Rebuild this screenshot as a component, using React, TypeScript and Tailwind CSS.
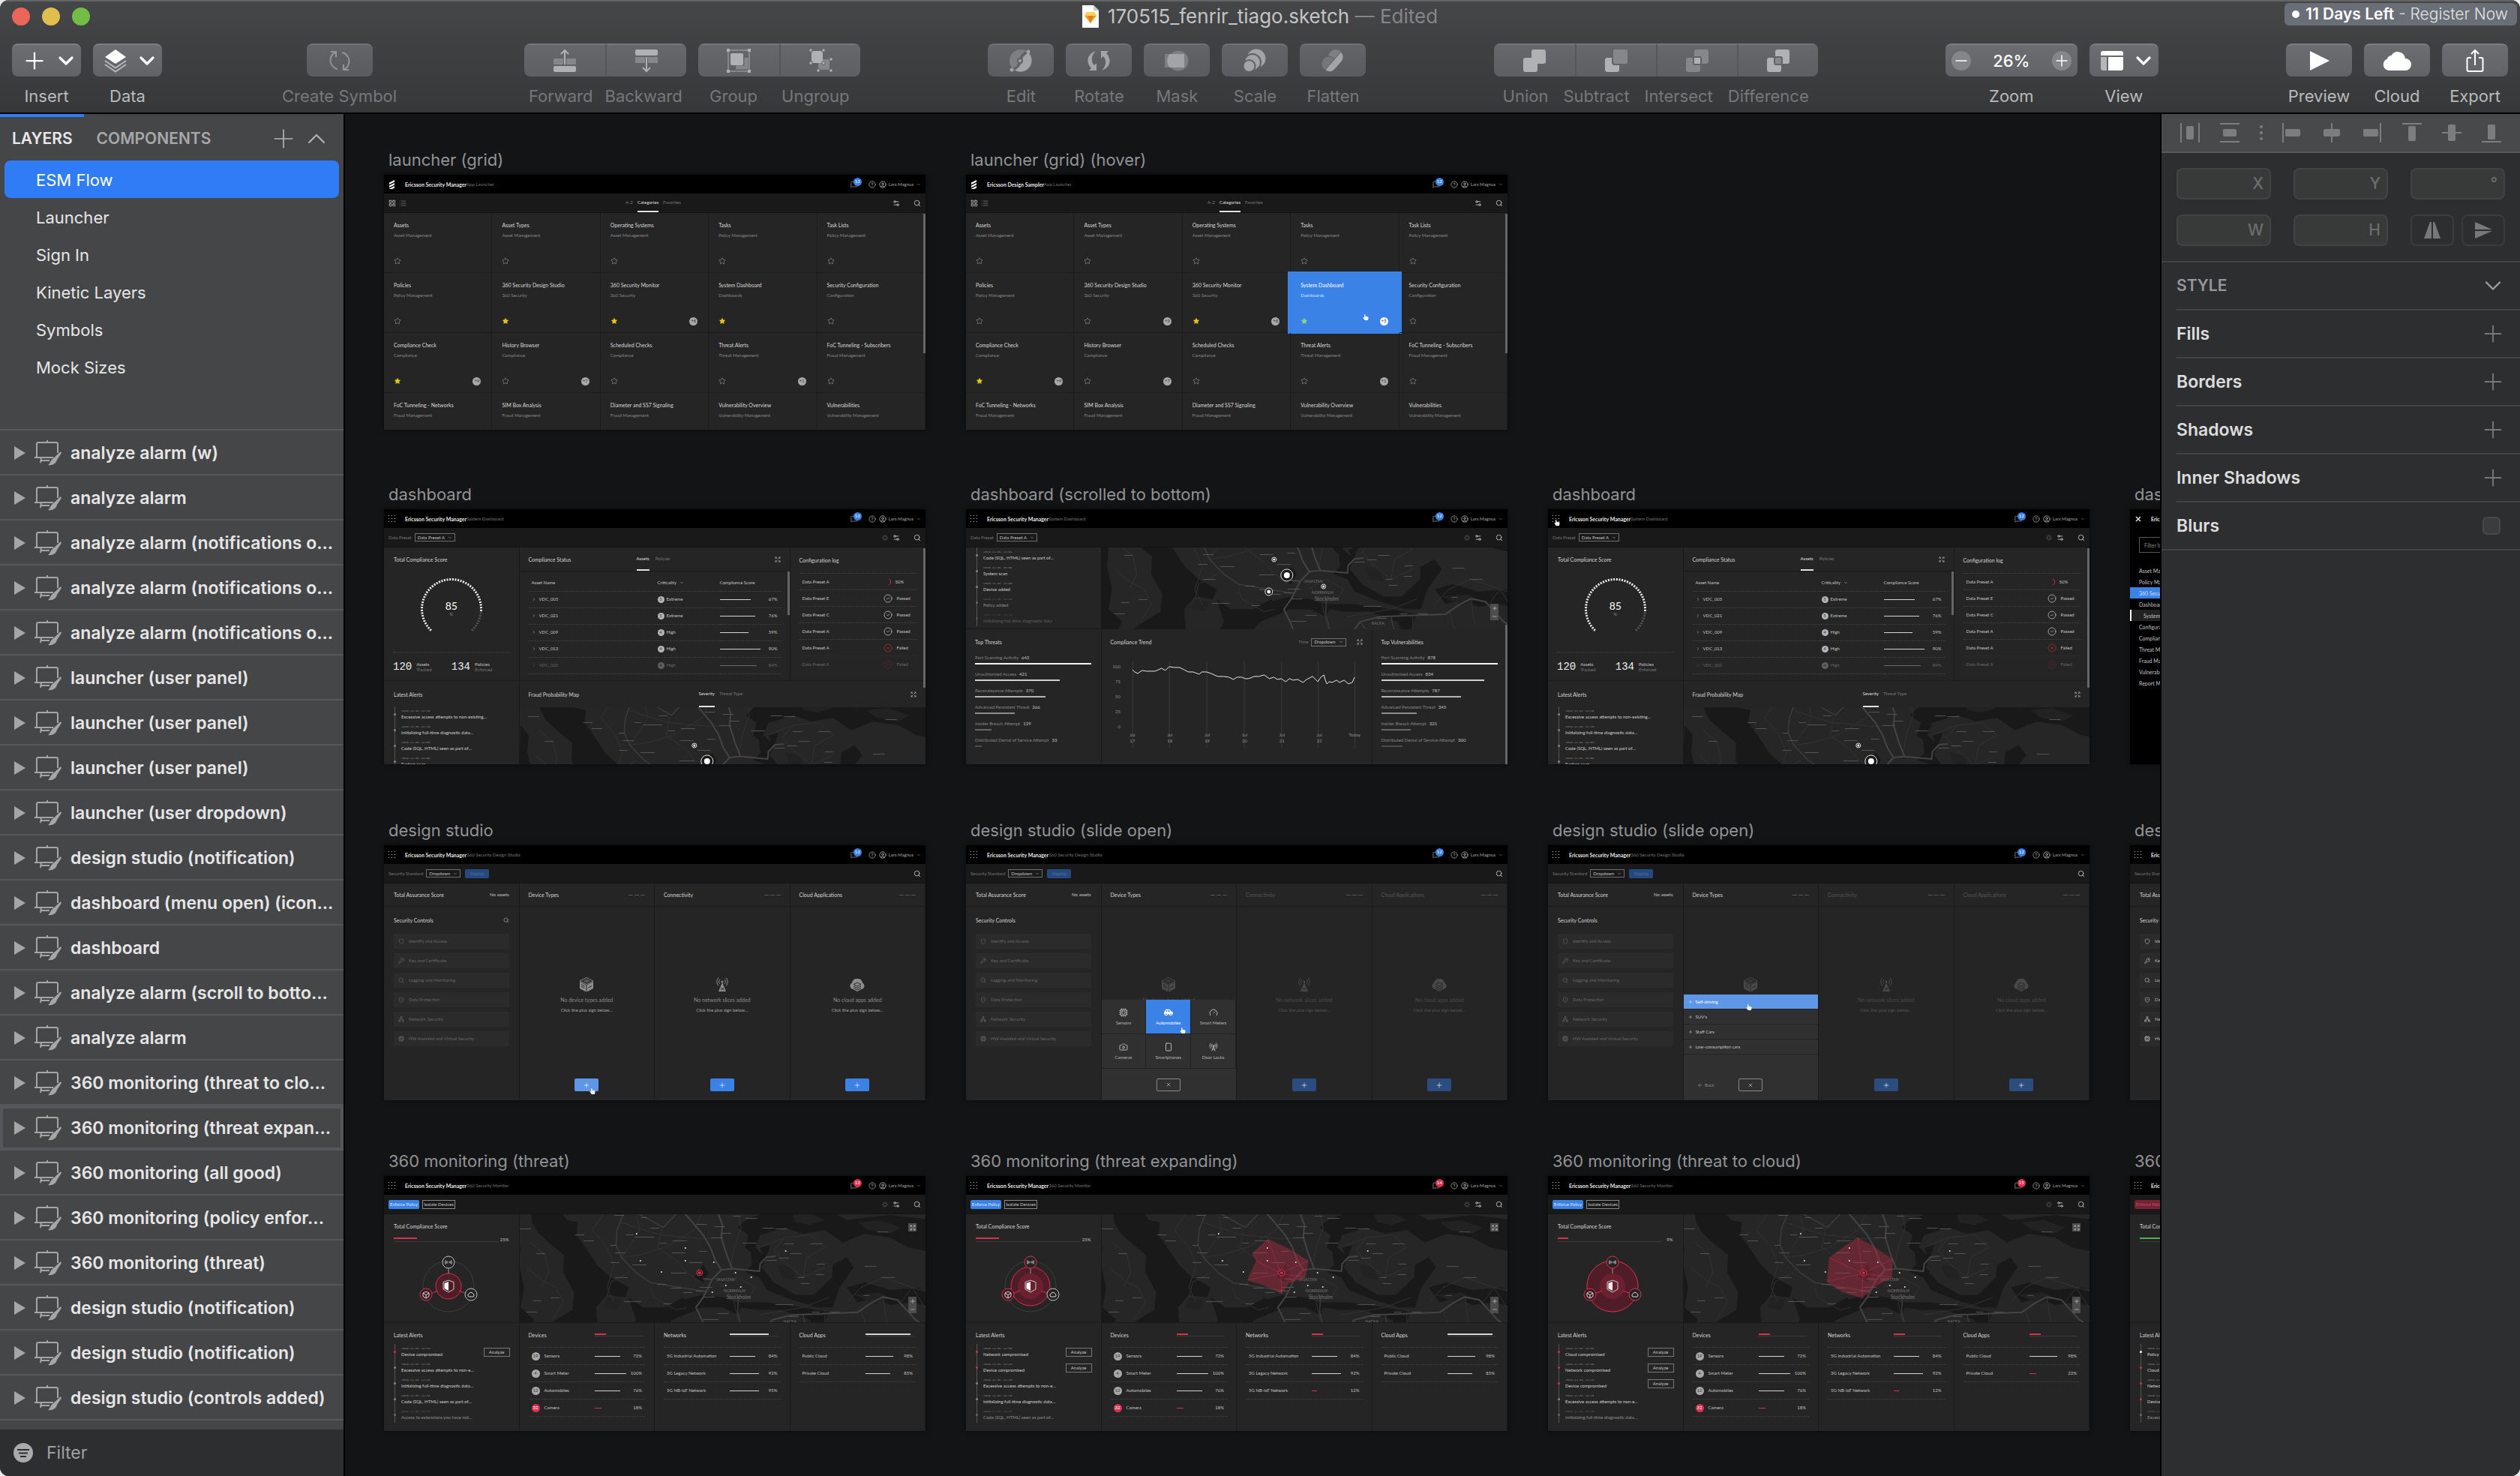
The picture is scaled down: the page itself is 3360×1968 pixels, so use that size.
import React from "react";
import type { ReactNode } from "react";
import { FaHandPointer, FaCarSide } from "react-icons/fa";
import {
  Camera,
  ChevronDown,
  ChevronRight,
  ChevronUp,
  CircleCheck,
  CircleHelp,
  CircleUser,
  CircleX,
  Cpu,
  Expand,
  Gauge as GaugeIcon,
  KeyRound,
  LayoutGrid,
  List,
  Loader,
  MessageSquare,
  Minus,
  Network,
  Plus,
  RadioTower,
  Search,
  Shield,
  Smartphone,
  Settings2,
  ShieldCheck,
  Star,
  X,
  ArrowLeft,
} from "lucide-react";

/* ------------------------------------------------------------------ */
/* Toolbar                                                             */
/* ------------------------------------------------------------------ */

const BRIGHT = "#bdbec0";
const DIM = "#8e8f92";

function Glyph({ children }: { children: ReactNode }) {
  return (
    <svg viewBox="0 0 32 32" className="size-8" fill="none" aria-hidden="true">
      {children}
    </svg>
  );
}

const glyphs: Record<string, ReactNode> = {
  symbol: (
    <Glyph>
      <g stroke="#a9aaac" strokeWidth="2" strokeLinecap="round">
        <path d="M12 27C5 24 2.500 18 4 12C5 8.500 7 6 10.500 4.500" />
        <path d="M4.500 4H11V10.500" />
        <path d="M20 5C27 8 29.500 14 28 20C27 23.500 25 26 21.500 27.500" />
        <path d="M27.500 28H21V21.500" />
      </g>
    </Glyph>
  ),
  forward: (
    <Glyph>
      <rect x="1" y="13" width="13" height="8" rx="1" fill={DIM} />
      <rect x="18" y="13" width="13" height="8" rx="1" fill={DIM} />
      <rect x="1" y="23" width="30" height="8" rx="2" fill={BRIGHT} />
      <path d="M16 21V2M11 7L16 2L21 7" stroke={BRIGHT} strokeWidth="2" />
    </Glyph>
  ),
  backward: (
    <Glyph>
      <rect x="1" y="1" width="30" height="8" rx="2" fill={BRIGHT} />
      <rect x="1" y="11" width="13" height="8" rx="1" fill={DIM} />
      <rect x="18" y="11" width="13" height="8" rx="1" fill={DIM} />
      <path d="M16 11V30M11 25L16 30L21 25" stroke={BRIGHT} strokeWidth="2" />
    </Glyph>
  ),
  group: (
    <Glyph>
      <rect x="2" y="2" width="28" height="28" stroke={DIM} strokeWidth="2" />
      <path d="M12 25H26V12" stroke={DIM} strokeWidth="5" />
      <rect x="5" y="6" width="17" height="16" rx="2" fill={BRIGHT} />
      <path d="M0 0h4v4H0zM28 0h4v4h-4zM0 28h4v4H0zM28 28h4v4h-4z" fill={BRIGHT} />
    </Glyph>
  ),
  ungroup: (
    <Glyph>
      <rect x="13" y="14" width="15" height="14" rx="2" fill={DIM} />
      <rect x="4" y="3" width="15" height="16" rx="2" fill={BRIGHT} />
      <path
        d="M1 0h4v4H1zM18 0h4v4h-4zM1 17h4v4H1zM18 17h4v4h-4zM11 27h4v4h-4zM28 27h4v4h-4zM28 12h4v4h-4z"
        fill={BRIGHT}
        stroke="#68696c"
        strokeWidth="1"
      />
    </Glyph>
  ),
  edit: (
    <Glyph>
      <circle cx="16" cy="16" r="15" fill={DIM} />
      <path d="M26 5A15 15 0 0 1 7 28C14 26 17 21 18 16C19 11 22 8 26 5Z" fill={BRIGHT} />
      <path d="M4 28C11 27 14 22 15 16C16 10 20 6 26 4" stroke="#68696c" strokeWidth="3" />
      <circle cx="15" cy="16" r="3" fill={BRIGHT} stroke="#68696c" strokeWidth="2" />
      <circle cx="26" cy="4" r="2.500" fill={BRIGHT} />
      <circle cx="4" cy="28" r="2.500" fill={BRIGHT} />
    </Glyph>
  ),
  rotate: (
    <Glyph>
      <path d="M12 3C4 6 1 11 1.500 17C2 21 4 24 6 26L3 29H13V19L10 22C5 17 6 9 12 3Z" fill={BRIGHT} />
      <path d="M20 29C28 26 31 21 30.500 15C30 11 28 8 26 6L29 3H19V13L22 10C27 15 26 23 20 29Z" fill={BRIGHT} />
    </Glyph>
  ),
  mask: (
    <Glyph>
      <rect x="0" y="7" width="20" height="18" rx="1" fill={DIM} />
      <circle cx="18" cy="16" r="14" fill={DIM} stroke="#68696c" strokeWidth="1" />
      <path d="M6.500 7H26V25H6.500A14 14 0 0 1 6.500 7Z" fill={BRIGHT} />
    </Glyph>
  ),
  scale: (
    <Glyph>
      <circle cx="18" cy="13" r="12.500" fill={BRIGHT} />
      <circle cx="13" cy="18" r="11" fill={BRIGHT} stroke="#68696c" strokeWidth="2" />
      <circle cx="8.500" cy="23" r="8" fill={BRIGHT} stroke="#68696c" strokeWidth="2" />
    </Glyph>
  ),
  flatten: (
    <Glyph>
      <circle cx="20" cy="11" r="10" fill={DIM} />
      <circle cx="11" cy="20" r="10" fill="#848588" stroke="#68696c" strokeWidth="1" />
      <path d="M27 4C31 8 31 14 27 18L18 28C14 32 9 31 6 28Z" fill={BRIGHT} stroke="#68696c" strokeWidth="1" />
    </Glyph>
  ),
  union: (
    <Glyph>
      <rect x="12" y="1" width="19" height="19" rx="3" fill={BRIGHT} />
      <rect x="1" y="12" width="19" height="19" rx="3" fill={BRIGHT} />
    </Glyph>
  ),
  subtract: (
    <Glyph>
      <rect x="1" y="12" width="19" height="19" rx="3" fill={BRIGHT} />
      <rect x="11" y="0" width="21" height="21" rx="3" fill={DIM} stroke="#68696c" strokeWidth="2" />
    </Glyph>
  ),
  intersect: (
    <Glyph>
      <rect x="12" y="1" width="19" height="19" rx="3" fill={DIM} />
      <rect x="1" y="12" width="19" height="19" rx="3" fill={DIM} />
      <rect x="11" y="11" width="10" height="10" rx="2" fill={BRIGHT} stroke="#68696c" strokeWidth="2" />
    </Glyph>
  ),
  difference: (
    <Glyph>
      <rect x="12" y="1" width="19" height="19" rx="3" fill={BRIGHT} />
      <rect x="1" y="12" width="19" height="19" rx="3" fill={BRIGHT} />
      <rect x="11" y="11" width="10" height="10" rx="2" fill={DIM} stroke="#68696c" strokeWidth="2" />
    </Glyph>
  ),
  stack: (
    <Glyph>
      <path d="M16 1L30 11L16 20L2 11Z" fill="#fff" />
      <path d="M2 16L16 25.500L30 16M2 21L16 30.500L30 21" stroke="#b5b6b8" strokeWidth="2" />
    </Glyph>
  ),
  view: (
    <Glyph>
      <path d="M1 7V6a3 3 0 0 1 3-3H28a3 3 0 0 1 3 3V9H1Z" fill="#fff" />
      <path d="M1 11H9V29H4a3 3 0 0 1-3-3Z" fill="#b5b6b8" />
      <path d="M11 11H31V26a3 3 0 0 1-3 3H11Z" fill="#fff" />
    </Glyph>
  ),
  play: (
    <Glyph>
      <path d="M4 3L30 16L4 29Z" fill="#fff" />
    </Glyph>
  ),
  cloud: (
    <svg viewBox="0 0 40 28" className="h-7 w-10" aria-hidden="true">
      <path d="M9 27a8 8 0 0 1-2-15.500C8 8 10 7 12.500 7A10 10 0 0 1 31 11a8 8 0 0 1 0 16Z" fill="#fff" />
    </svg>
  ),
  export: (
    <Glyph>
      <path
        d="M11 12H7.500a2 2 0 0 0-2 2V28a2 2 0 0 0 2 2H24.500a2 2 0 0 0 2-2V14a2 2 0 0 0-2-2H21M16 22V2M11 7L16 2L21 7"
        stroke="#fff"
        strokeWidth="2"
      />
    </Glyph>
  ),
};

const buttonFace = "flex h-11 items-center border-t-2 border-[#7d7e81] bg-linear-to-b from-[#6c6d70] to-[#626366]";

function ToolButton({ label, icon, live = false }: { label: string; icon: string; live?: boolean }) {
  return (
    <div className="flex flex-col items-center gap-2">
      <button aria-label={label} className={`${buttonFace} w-22 justify-center rounded-lg ${live ? "" : "opacity-80"}`}>
        {glyphs[icon]}
      </button>
      <span className={`text-[22px] leading-9 ${live ? "text-[#b9babb]" : "text-[#77787a]"}`}>{label}</span>
    </div>
  );
}

function MenuButton({ label, children }: { label: string; children: ReactNode }) {
  return (
    <div className="flex flex-col items-center gap-2">
      <button aria-label={label} className={`${buttonFace} w-[92px] gap-2 rounded-lg pl-3 text-white`}>
        <span className="flex w-9 justify-center">{children}</span>
        <ChevronDown className="size-8" strokeWidth={2.5} />
      </button>
      <span className="text-[22px] leading-9 text-[#b9babb]">{label}</span>
    </div>
  );
}

function Segments({ items, gap }: { items: [string, string][]; gap: string }) {
  return (
    <div className="flex flex-col items-center gap-2">
      <div className="flex overflow-hidden rounded-lg opacity-90">
        {items.map(([label, icon], i) => (
          <button
            key={label}
            aria-label={label}
            className={`${buttonFace} w-27 justify-center ${i > 0 ? "border-l-2 border-l-[#58595c]" : ""}`}
          >
            {glyphs[icon]}
          </button>
        ))}
      </div>
      <div className={`flex ${gap}`}>
        {items.map(([label]) => (
          <span key={label} className="text-[22px] leading-9 text-[#77787a]">
            {label}
          </span>
        ))}
      </div>
    </div>
  );
}

function TitleBar() {
  return (
    <header className="flex flex-col border-b-2 border-black bg-linear-to-b from-[#454648] to-[#37383a]">
      <div className="grid h-14 grid-cols-3 items-start border-t-2 border-[#636466]">
        <div className="flex gap-4 px-4 pt-2">
          <button aria-label="Close" className="size-6 rounded-full bg-[#ec6559]" />
          <button aria-label="Minimize" className="size-6 rounded-full bg-[#e0bd4d]" />
          <button aria-label="Full screen" className="size-6 rounded-full bg-[#71bd46]" />
        </div>
        <h1 className="flex items-center justify-center gap-3 pt-1 text-[26px] leading-8 whitespace-nowrap text-[#c3c4c5]">
          <svg viewBox="0 0 22 30" className="h-[30px] w-[22px]" aria-hidden="true">
            <path d="M0 0H15L22 7V30H0Z" fill="#fff" />
            <path d="M15 0V7H22Z" fill="#c9c9c9" />
            <path d="M6 9H16L19 14L11 24L3 14Z" fill="#f0a429" />
            <path d="M6 9H16L19 14H3Z" fill="#fbd058" />
            <path d="M7 14H15L11 24Z" fill="#ea7b1d" />
          </svg>
          <span>
            170515_fenrir_tiago.sketch <span className="text-[#85868a]">— Edited</span>
          </span>
        </h1>
        <div className="flex justify-end pt-0.5 pr-1">
          <a
            href="#register"
            className="flex h-[30px] items-center gap-2 rounded-md bg-[#6a6e76] pr-3 pl-2.5 text-[21px] font-light whitespace-nowrap text-[#e4e5e7]"
          >
            <span className="size-2.5 rounded-full bg-white" />
            <span>
              <b className="font-semibold text-white">11 Days Left</b> - Register Now
            </span>
          </a>
        </div>
      </div>
      <div className="flex h-[94px] items-start justify-between px-4 pt-0.5">
        <div className="flex gap-40">
          <div className="flex gap-4">
            <MenuButton label="Insert">
              <Plus className="size-9" strokeWidth={1.5} />
            </MenuButton>
            <MenuButton label="Data">{glyphs.stack}</MenuButton>
          </div>
          <ToolButton label="Create Symbol" icon="symbol" />
        </div>
        <div className="flex gap-4">
          <Segments gap="gap-4" items={[["Forward", "forward"], ["Backward", "backward"]]} />
          <Segments gap="gap-8" items={[["Group", "group"], ["Ungroup", "ungroup"]]} />
        </div>
        <div className="flex gap-4">
          <ToolButton label="Edit" icon="edit" />
          <ToolButton label="Rotate" icon="rotate" />
          <ToolButton label="Mask" icon="mask" />
          <ToolButton label="Scale" icon="scale" />
          <ToolButton label="Flatten" icon="flatten" />
        </div>
        <Segments
          gap="gap-5"
          items={[
            ["Union", "union"],
            ["Subtract", "subtract"],
            ["Intersect", "intersect"],
            ["Difference", "difference"],
          ]}
        />
        <div className="flex gap-4">
          <div className="flex flex-col items-center gap-2">
            <div className={`${buttonFace} w-44 justify-between rounded-lg px-2 text-white`}>
              <button aria-label="Zoom out" className="flex size-6.5 items-center justify-center rounded-full bg-[#85868a]">
                <Minus className="size-6" strokeWidth={1.5} />
              </button>
              <span className="text-[22px] font-medium">26%</span>
              <button aria-label="Zoom in" className="flex size-6.5 items-center justify-center rounded-full bg-[#85868a]">
                <Plus className="size-6" strokeWidth={1.5} />
              </button>
            </div>
            <span className="text-[22px] leading-9 text-[#b9babb]">Zoom</span>
          </div>
          <MenuButton label="View">{glyphs.view}</MenuButton>
        </div>
        <div className="flex gap-4">
          <ToolButton label="Preview" icon="play" live />
          <ToolButton label="Cloud" icon="cloud" live />
          <ToolButton label="Export" icon="export" live />
        </div>
      </div>
    </header>
  );
}

/* ------------------------------------------------------------------ */
/* Layer list                                                          */
/* ------------------------------------------------------------------ */

const pages = ["ESM Flow", "Launcher", "Sign In", "Kinetic Layers", "Symbols", "Mock Sizes"];

const layers = [
  "analyze alarm (w)",
  "analyze alarm",
  "analyze alarm (notifications o...",
  "analyze alarm (notifications o...",
  "analyze alarm (notifications o...",
  "launcher (user panel)",
  "launcher (user panel)",
  "launcher (user panel)",
  "launcher (user dropdown)",
  "design studio (notification)",
  "dashboard (menu open) (icon...",
  "dashboard",
  "analyze alarm (scroll to botto...",
  "analyze alarm",
  "360 monitoring (threat to clo...",
  "360 monitoring (threat expan...",
  "360 monitoring (all good)",
  "360 monitoring (policy enfor...",
  "360 monitoring (threat)",
  "design studio (notification)",
  "design studio (notification)",
  "design studio (controls added)",
];

function ArtboardIcon() {
  return (
    <svg viewBox="0 0 36 34" className="h-[34px] w-9 shrink-0" fill="none" aria-hidden="true">
      <g stroke="#a5a6a8" strokeWidth="2">
        <path d="M3 23V5a2 2 0 0 1 2-2H29a2 2 0 0 1 2 2V17M17 3V0M0 23H25M9 23L8 30M8 27H20" />
      </g>
      <path d="M35 15L24 25C21 27 21 31 18 33C24 34 29 31 30 26L36 17Z" fill="#a5a6a8" />
    </svg>
  );
}

function Sidebar() {
  return (
    <aside className="flex w-[460px] shrink-0 flex-col border-r-2 border-black bg-[#454648]">
      <div className="h-1 w-28 bg-[#2f7cf6]" />
      <div className="flex h-[58px] items-center pr-4 pl-4">
        <button className="text-[21px] font-semibold text-[#e8e8e9]">LAYERS</button>
        <button className="ml-8 text-[21px] font-semibold text-[#a7a8aa]">COMPONENTS</button>
        <button aria-label="Add page" className="ml-auto text-[#b4b5b7]">
          <Plus className="size-10" strokeWidth={1} />
        </button>
        <button aria-label="Collapse pages" className="ml-1 text-[#b4b5b7]">
          <ChevronUp className="size-10" strokeWidth={1.25} />
        </button>
      </div>
      <nav className="flex h-[358px] flex-col px-1.5">
        {pages.map((page, i) => (
          <button
            key={page}
            className={`h-[50px] rounded-lg pt-0.5 pl-[42px] text-left text-[22px] text-[#e6e6e7] ${
              i === 0 ? "bg-[#2f7cf6] text-white" : ""
            }`}
          >
            {page}
          </button>
        ))}
      </nav>
      <ul className="min-h-0 flex-1 overflow-hidden border-t-2 border-[#595a5c]">
        {layers.map((layer, i) => (
          <li
            key={i}
            className={`flex h-15 items-center border-b-2 border-[#56575a] pt-0.5 pl-[18px] ${
              i === 15 ? "outline-4 -outline-offset-4 outline-[#56575a]" : ""
            }`}
          >
            <button aria-label={`Expand ${layer}`} className="shrink-0">
              <svg viewBox="0 0 16 18" className="h-[18px] w-4" aria-hidden="true">
                <path d="M1 0L16 9L1 18Z" fill="#a5a6a8" />
              </svg>
            </button>
            <span className="ml-3 flex">
              <ArtboardIcon />
            </span>
            <span className="ml-3 text-[23px] font-semibold whitespace-nowrap text-[#e6e6e7]">{layer}</span>
          </li>
        ))}
      </ul>
      <label className="flex h-[62px] shrink-0 items-center gap-[18px] bg-[#2d2e30] pl-[18px]">
        <svg viewBox="0 0 26 26" className="size-[26px]" aria-hidden="true">
          <circle cx="13" cy="13" r="13" fill="#a9aaab" />
          <path d="M5 9H21M7 13.500H19M9 18H17" stroke="#2d2e30" strokeWidth="2" />
        </svg>
        <input
          aria-label="Filter layers"
          placeholder="Filter"
          className="w-80 bg-transparent text-[23px] text-white outline-none placeholder:text-[#a0a1a3]"
        />
      </label>
    </aside>
  );
}

/* ------------------------------------------------------------------ */
/* Inspector                                                           */
/* ------------------------------------------------------------------ */

function AlignGlyph({ d, bar }: { d: string; bar: [number, number, number, number] }) {
  return (
    <svg viewBox="0 0 28 28" className="size-7" aria-hidden="true">
      <path d={d} stroke="#7c7d7f" strokeWidth="2" />
      <rect x={bar[0]} y={bar[1]} width={bar[2]} height={bar[3]} rx="2" fill="#7c7d7f" />
    </svg>
  );
}

const aligners: { label: string; d: string; bar: [number, number, number, number] }[] = [
  { label: "Distribute horizontally", d: "M2 1V27M26 1V27", bar: [9, 5, 10, 18] },
  { label: "Distribute vertically", d: "M1 2H27M1 26H27", bar: [5, 9, 18, 10] },
  { label: "Align left", d: "M2 1V27", bar: [5, 9, 20, 10] },
  { label: "Align center", d: "M14 1V27", bar: [3, 9, 22, 10] },
  { label: "Align right", d: "M26 1V27", bar: [3, 9, 20, 10] },
  { label: "Align top", d: "M1 2H27", bar: [9, 5, 10, 20] },
  { label: "Align middle", d: "M1 14H27", bar: [9, 3, 10, 22] },
  { label: "Align bottom", d: "M1 26H27", bar: [9, 3, 10, 20] },
];

function Field({ label }: { label: string }) {
  return (
    <label className="flex h-[42px] items-center rounded-lg border-2 border-[#424345] bg-[#383939] px-2">
      <input aria-label={label} className="min-w-0 flex-1 bg-transparent text-[21px] text-white outline-none" />
      <span className="text-[21px] font-medium text-[#6c6d6f]">{label}</span>
    </label>
  );
}

function Inspector() {
  return (
    <aside className="flex w-[480px] shrink-0 flex-col border-l-2 border-black bg-[#2d2e30]">
      <div className="flex h-[52px] items-center justify-between border-b-2 border-[#58595b] bg-[#48494b] px-6">
        {aligners.map((a, i) => (
          <React.Fragment key={a.label}>
            {i === 2 && (
              <svg viewBox="0 0 4 24" className="h-6 w-1" fill="#7c7d7f" aria-hidden="true">
                <circle cx="2" cy="4" r="2" />
                <circle cx="2" cy="12" r="2" />
                <circle cx="2" cy="20" r="2" />
              </svg>
            )}
            <button aria-label={a.label}>
              <AlignGlyph d={a.d} bar={a.bar} />
            </button>
          </React.Fragment>
        ))}
      </div>
      <div className="grid h-[146px] grid-cols-3 content-center gap-x-[30px] gap-y-5 border-b-2 border-[#424345] px-5">
        <Field label="X" />
        <Field label="Y" />
        <Field label="°" />
        <Field label="W" />
        <Field label="H" />
        <div className="grid grid-cols-2 gap-2.5">
          <button aria-label="Flip horizontally" className="flex items-center justify-center rounded-lg border-2 border-[#3a3b3d]">
            <svg viewBox="0 0 24 24" className="size-6" fill="#77787a" aria-hidden="true">
              <path d="M11 1V23H1L9 1ZM13 1V23H23L15 1Z" />
            </svg>
          </button>
          <button aria-label="Flip vertically" className="flex items-center justify-center rounded-lg border-2 border-[#3a3b3d]">
            <svg viewBox="0 0 24 24" className="size-6" fill="#77787a" aria-hidden="true">
              <path d="M1 11H24L1 1ZM1 13H24L1 23Z" />
            </svg>
          </button>
        </div>
      </div>
      <div className="flex flex-col border-b-2 border-[#424345] pl-5">
        <div className="flex h-[62px] items-center justify-between pr-[18px]">
          <h2 className="text-[21px] font-semibold text-[#96979a]">STYLE</h2>
          <button aria-label="Collapse style" className="text-[#a0a1a3]">
            <ChevronDown className="size-9" strokeWidth={1.5} />
          </button>
        </div>
        {["Fills", "Borders", "Shadows", "Inner Shadows", "Blurs"].map((name) => (
          <div key={name} className="flex h-16 items-center justify-between border-t-2 border-[#424345] pr-[18px]">
            <h3 className="text-[23px] font-semibold text-[#dcdddd]">{name}</h3>
            {name === "Blurs" ? (
              <input
                type="checkbox"
                aria-label="Enable blurs"
                className="mr-2 size-6 appearance-none rounded-md border-2 border-[#48494b] bg-[#3b3c3d]"
              />
            ) : (
              <button aria-label={`Add ${name}`} className="text-[#77787a]">
                <Plus className="size-9" strokeWidth={1.25} />
              </button>
            )}
          </div>
        ))}
      </div>
    </aside>
  );
}

/* ------------------------------------------------------------------ */
/* Artboards: shared parts                                             */
/* ------------------------------------------------------------------ */

function Artboard({ name, children }: { name: string; children: ReactNode }) {
  return (
    <section className="flex w-[722px] shrink-0 flex-col">
      <h2 className="h-[33px] pl-1.5 text-[22px] leading-[26px] whitespace-nowrap text-[#929395]">{name}</h2>
      <div className="relative flex h-[340px] flex-col overflow-hidden bg-[#252525] font-[Lato,sans-serif] text-[7px] leading-2 whitespace-nowrap text-[#c4c4c4] shadow-[0_0_6px_rgba(0,0,0,0.6)]">
        {children}
      </div>
    </section>
  );
}

function AppHeader({
  title = "Ericsson Security Manager",
  sub,
  lead = "dots",
  count = 12,
  alarm = false,
}: {
  title?: string;
  sub: string;
  lead?: "dots" | "logo" | "close";
  count?: number;
  alarm?: boolean;
}) {
  return (
    <div className="flex h-[25px] shrink-0 items-center bg-black pr-1.5 pl-1.5">
      <svg viewBox="0 0 10 12" className="h-3 w-2.5" aria-hidden="true">
        {lead === "dots" &&
          [0, 1, 2].map((r) =>
            [0, 1, 2].map((c) => <rect key={`${r}${c}`} x={c * 4} y={1 + r * 4} width="1" height="1" fill="#ccc" />),
          )}
        {lead === "logo" && (
          <path d="M1 3.500L8 0V2.500L1 6ZM1 7.500L8 4V6.500L1 10ZM1 11.500L8 8V10.500L1 14Z" fill="#fff" />
        )}
        {lead === "close" && <path d="M2 3L8 9M8 3L2 9" stroke="#ddd" strokeWidth="1.500" />}
      </svg>
      <span className="ml-3 font-bold text-[#e8e8e8]">{title}</span>
      <span className="text-[6px] text-[#777]">{sub}</span>
      <span className="relative ml-auto flex text-[#8a8a8a]">
        <MessageSquare className="size-2.5" />
        <span
          className={`absolute -top-1 left-1 flex size-[11px] items-center justify-center rounded-full text-[6px] text-white ${
            alarm ? "bg-[#d9304f]" : "bg-[#3b82e6]"
          }`}
        >
          {count}
        </span>
      </span>
      <CircleHelp className="ml-3.5 size-2.5 text-[#9a9a9a]" />
      <CircleUser className="ml-1 size-2.5 text-[#b5b5b5]" />
      <span className="ml-[3px] text-[6px] text-[#a5a5a5]">Lars Magnus</span>
      <ChevronDown className="ml-1 size-1.5 text-[#9f9f9f]" />
    </div>
  );
}

function SubBar({ children, tools = "full" }: { children: ReactNode; tools?: "full" | "search" | "toggle" }) {
  return (
    <div className="flex h-[26px] shrink-0 items-center border-b border-[#131313] bg-[#191919] pr-1.5 pl-1.5">
      {children}
      <span className="ml-auto flex items-center text-[#c9c9c9]">
        {tools === "full" && <Loader className="mr-1.5 size-2 text-[#888]" />}
        {tools !== "search" && <Settings2 className="mr-4.5 size-2.5" />}
        <Search className="size-2.5" />
      </span>
    </div>
  );
}

function Picker({ label, value }: { label: string; value: string }) {
  return (
    <span className="flex items-center gap-1 text-[6px] text-[#757575]">
      {label}
      <span className="flex h-[11px] items-center gap-1 border border-[#6f6f6f] px-[3px] text-[#c4c4c4]">
        {value}
        <ChevronDown className="size-1.5" />
      </span>
    </span>
  );
}

function Tab({ children, on = false }: { children: ReactNode; on?: boolean }) {
  return (
    <span className={`flex h-full items-center border-b-2 ${on ? "border-[#e4e4e4] text-[#dedede]" : "border-transparent text-[#777]"}`}>
      {children}
    </span>
  );
}

function Pointer({ className }: { className: string }) {
  return <FaHandPointer className={`absolute size-2 text-white ${className}`} />;
}

function ScrollBar({ className }: { className: string }) {
  return <span className={`absolute right-0 w-[3px] bg-[#666] ${className}`} />;
}

/* ------------------------------------------------------------------ */
/* City map                                                            */
/* ------------------------------------------------------------------ */

const mapLabels: [number, number, number][] = [
  [400, 324, 30], [446, 424, 24], [553, 349, 24], [576, 373, 28], [660, 269, 26], [734, 280, 16], [761, 321, 22],
  [693, 347, 20], [718, 357, 50], [786, 380, 18], [820, 371, 38], [650, 390, 16], [662, 421, 28], [818, 421, 36],
  [893, 413, 22], [866, 458, 36], [886, 306, 28], [936, 315, 28], [956, 343, 26], [926, 360, 32], [985, 274, 22],
  [1022, 282, 32], [1015, 382, 36], [1068, 320, 30], [1104, 323, 32], [1128, 385, 26], [1200, 385, 32],
  [1144, 424, 30], [1114, 441, 26], [1078, 450, 28], [1218, 465, 22], [1215, 508, 22], [1166, 520, 18],
  [1174, 544, 24], [1384, 336, 30], [1350, 475, 32], [1396, 520, 34], [710, 467, 38], [650, 458, 24], [816, 501, 40],
  [662, 520, 34], [780, 547, 24], [816, 562, 28], [850, 580, 26], [438, 611, 22], [484, 600, 24], [686, 614, 46],
  [796, 625, 22], [944, 662, 30], [906, 687, 40], [418, 656, 28], [1104, 628, 48], [1204, 656, 20], [1254, 657, 26],
  [1140, 676, 26], [1346, 590, 16], [906, 598, 30], [896, 557, 34], [884, 573, 26],
];

const px = (x: number) => Math.round((x - 400) * 0.4847);
const py = (y: number) => Math.round((y - 267) / 3);

const devicePins: [number, number][] = [
  [722, 346], [855, 401], [733, 452], [855, 452], [789, 498], [935, 458],
  [1133, 414], [994, 501], [1038, 518], [968, 551], [1009, 557], [930, 580],
];

function CityMap({
  x = 0,
  y = 0,
  height,
  pins,
}: {
  x?: number;
  y?: number;
  height: number;
  pins: "fraud" | "device" | "spread" | "cloud";
}) {
  return (
    <svg
      viewBox={`${x} ${y} 542 ${height}`}
      preserveAspectRatio="xMinYMin slice"
      className="block w-full"
      fill="none"
      aria-label="Map of Stockholm"
    >
      <rect x="-20" y="-10" width="600" height="200" fill="#262626" />
      <g transform="scale(0.4847 0.3333) translate(-400 -267)">
        <g fill="#191919">
          <path d="M430 240H505L530 290L560 300L556 350L590 420L612 470L650 520L700 560L690 600L640 590L610 640L616 740H450L500 690L545 650L550 580L520 500L522 430L480 380L450 340L434 300Z" />
          <path d="M380 360L402 400L398 470L412 560L402 640L440 690L420 740H370Z" />
          <path d="M1056 240H1240L1300 290L1420 270L1540 290V420L1470 400L1420 360L1350 345L1290 380L1240 330L1180 345L1130 320L1062 350L1048 400L1070 430L1062 400L1090 390L1080 430L1066 480L1100 540L1160 590L1210 590L1260 520L1262 470L1300 440L1320 480L1280 560L1262 640L1220 640L1150 610L1080 570L1060 520L1020 498L1040 470L1036 420L1020 400L1030 350L1000 320L1022 290L1060 270Z" />
          <path d="M850 610L900 590L960 600L1000 620L1080 620L1180 640L1250 660L1230 740H1210L1200 690L1120 650L1050 650L1010 640L1000 670L960 640L900 640L870 660L820 690L760 670L800 650Z" />
          <path d="M1300 560L1350 540L1420 570L1500 560L1540 600V640L1480 620L1420 630L1380 600L1330 620Z" />
          <path d="M700 600L740 640L800 640L850 600L860 620L820 690L790 740H700L720 690Z" />
          <path d="M905 470L920 500L905 540L880 520Z" />
        </g>
        <g fill="#222">
          <path d="M1150 270L1200 262L1240 290L1200 310L1160 300Z" />
          <path d="M1330 300L1390 290L1450 320L1420 345L1360 330Z" />
          <path d="M1110 470L1150 480L1160 530L1120 520Z" />
          <path d="M640 600L680 610L670 650L630 640Z" />
          <path d="M1320 590L1390 580L1420 600L1380 625Z" />
        </g>
        <g stroke="#333" strokeWidth="1">
          {[
            "M630 267L600 330L640 400L660 470L640 560L660 620",
            "M680 300L740 330L790 350L900 365L960 360",
            "M790 330L780 400L830 450L860 500L900 540",
            "M720 267L730 330L700 400L680 440L730 430L800 400L880 330L900 267",
            "M420 480L460 530L500 560L520 620L490 690",
            "M430 380L470 430L480 500L460 560",
            "M950 560L1000 520L1050 560L1030 600L980 590L950 540",
            "M1000 267L1010 320L990 400L980 480M1060 400L1130 360L1200 350L1240 400L1190 440L1180 520",
            "M1130 360L1100 410L1130 460L1180 520L1240 480",
            "M1300 620L1340 560L1400 520L1480 560L1515 640M1400 600L1410 698",
            "M760 560L770 600L830 650L860 640M700 500L650 540L640 600",
            "M1000 560L990 620L1010 740M1060 670L1180 640L1250 600",
            "M1450 620L1480 560L1530 580M1240 660V740M1340 650L1360 740",
          ].map((d) => (
            <path key={d} d={d} vectorEffect="non-scaling-stroke" />
          ))}
        </g>
        <g stroke="#444" strokeWidth="2" strokeLinejoin="round">
          {[
            "M840 240L870 290L905 350L925 400L938 450L955 490L930 528L905 600L885 640L905 700L915 740",
            "M940 240L958 310L955 360L970 430L985 485L1060 495L1062 465L1080 438L1105 435",
            "M955 490L985 485M905 525L930 528",
            "M1070 740L1095 690L1150 670L1240 665L1330 660L1370 620L1400 598L1440 610L1490 690L1520 720",
          ].map((d) => (
            <path key={d} d={d} vectorEffect="non-scaling-stroke" />
          ))}
        </g>
        <g stroke="#3c3c3c" strokeWidth="1.500" strokeLinejoin="round">
          {[
            "M690 240L740 275L795 320L830 267L850 240",
            "M685 267L668 330L665 390L680 440L720 500L760 540L840 560L905 575",
            "M1095 690L1120 740M1180 668L1190 740M1002 600L1000 660L1015 740",
          ].map((d) => (
            <path key={d} d={d} vectorEffect="non-scaling-stroke" />
          ))}
        </g>
      </g>
      {mapLabels.map(([lx, ly, w]) => (
        <rect key={`${lx}-${ly}`} x={px(lx)} y={py(ly)} width={Math.round(w / 2)} height="1" fill="#555" />
      ))}
      <g fill="#757575" fontSize="5" fontFamily="Lato, sans-serif">
        <text x="262" y="89">VASASTAN</text>
        <text x="272" y="104">NORRMALM</text>
        <text x="276" y="113" fontSize="7">Stockholm</text>
        <text x="352" y="145">NACKA</text>
      </g>
      {pins === "fraud" && (
        <g>
          {[
            [222, 58, 3],
            [239, 79, 8],
            [215, 101, 5],
            [288, 94, 3],
          ].map(([cx, cy, r]) => (
            <g key={cx}>
              <circle cx={cx} cy={cy} r={r} fill="#1a1a1a" stroke="#e6e6e6" strokeWidth="1" />
              <circle cx={cx} cy={cy} r={r / 2} fill="#fff" />
            </g>
          ))}
        </g>
      )}
      {pins === "spread" && (
        <g>
          <path d="M222 33L250 46L276 62L272 84L250 92L240 106L214 94L194 88L206 62L200 52Z" fill="#c02c46" opacity="0.4" />
          <path d="M222 33L239 79L276 62M194 88L239 79L240 106M206 62L239 79L272 84" stroke="#d9304f" opacity="0.4" />
        </g>
      )}
      {pins === "cloud" && (
        <g>
          <path d="M232 31L252 42L279 60L278 84L256 96L238 112L212 104L191 90L194 58L210 46Z" fill="#c02c46" opacity="0.4" />
          <path d="M232 31L239 79L279 60M191 90L239 79L238 112M194 58L239 79L278 84" stroke="#d9304f" opacity="0.4" />
        </g>
      )}
      {pins !== "fraud" && (
        <g>
          {devicePins.map(([cx, cy]) => (
            <circle key={`${cx}-${cy}`} cx={px(cx)} cy={py(cy)} r="1" fill="#e8e8e8" />
          ))}
          <circle cx="240" cy="78" r="4" stroke="#d9304f" fill="#3a1a20" />
          <circle cx="240" cy="78" r="2" fill="#d9304f" />
        </g>
      )}
    </svg>
  );
}

function MapZoom({ className }: { className: string }) {
  return (
    <span className={`absolute right-3 flex h-[22px] w-[11px] flex-col items-center justify-around bg-[#4d4d4d] text-[#ccc] ${className}`}>
      <Plus className="size-2" />
      <Minus className="size-2" />
    </span>
  );
}

/* ------------------------------------------------------------------ */
/* Launcher                                                            */
/* ------------------------------------------------------------------ */

type Tile = [title: string, sub: string, starred?: boolean, badge?: string];

const tiles: Tile[] = [
  ["Assets", "Asset Management"],
  ["Asset Types", "Asset Management"],
  ["Operating Systems", "Asset Management"],
  ["Tasks", "Policy Management"],
  ["Task Lists", "Policy Management"],
  ["Policies", "Policy Management"],
  ["360 Security Design Studio", "360 Security", true],
  ["360 Security Monitor", "360 Security", true, "+8"],
  ["System Dashboard", "Dashboards", true],
  ["Security Configuration", "Configuration"],
  ["Compliance Check", "Compliance", true, "+9"],
  ["History Browser", "Compliance", false, "+7"],
  ["Scheduled Checks", "Compliance"],
  ["Threat Alerts", "Threat Management", false, "+1"],
  ["FoC Tunneling - Subscribers", "Fraud Management"],
  ["FoC Tunneling - Networks", "Fraud Management"],
  ["SIM Box Analysis", "Fraud Management"],
  ["Diameter and SS7 Signaling", "Fraud Management"],
  ["Vulnerability Overview", "Vulnerability Management"],
  ["Vulnerabilities", "Vulnerability Management"],
];

function Launcher({ hover = false }: { hover?: boolean }) {
  return (
    <>
      <AppHeader lead="logo" title={hover ? "Ericsson Design Sampler" : undefined} sub="App Launcher" />
      <SubBar tools="toggle">
        <LayoutGrid className="size-2.5 text-[#c4c4c4]" />
        <List className="ml-1 size-2.5 text-[#777]" />
        <span className="ml-72 flex h-full gap-1.5 pl-1 text-[6px]">
          <Tab>A-Z</Tab>
          <Tab on>Categories</Tab>
          <Tab>Favorites</Tab>
        </span>
      </SubBar>
      <div className="relative grid flex-1 auto-rows-[80px] grid-cols-5 overflow-hidden">
        {tiles.map(([title, sub, starred, badge], i) => {
          const lit = hover && i === 8;
          const gold = starred && !(hover && i === 6);
          const mark = badge ?? (hover && (i === 6 || i === 8) ? "+3" : undefined);
          return (
            <div key={title} className="relative border-r border-b border-[#1b1b1b]">
              {lit && <span className="absolute -inset-x-1 -inset-y-0.5 bg-[#3b82e6]" />}
              <div className="relative flex h-full flex-col pt-3 pr-3.5 pl-[13px]">
                <span className={lit ? "text-white" : "text-[#d8d8d8]"}>{title}</span>
                <span className={`mt-1.5 text-[6px] ${lit ? "text-[#cfe0fa]" : "text-[#858585]"}`}>{sub}</span>
                <span className="mt-6 flex h-3 items-center justify-between">
                  {gold ? (
                    <Star className={`size-2.5 fill-current stroke-0 ${lit ? "text-[#8ed08a]" : "text-[#e5c21c]"}`} />
                  ) : (
                    <Star className="size-2.5 text-[#9a9a9a]" strokeWidth={1.5} />
                  )}
                  {mark && (
                    <span
                      className={`flex h-[11px] min-w-[11px] items-center justify-center rounded-full text-[6px] text-[#333] ${
                        lit ? "bg-white" : "bg-[#a9a9a9]"
                      }`}
                    >
                      {mark}
                    </span>
                  )}
                </span>
                {lit && <Pointer className="right-10 bottom-4" />}
              </div>
            </div>
          );
        })}
        <ScrollBar className="top-px h-[186px]" />
      </div>
    </>
  );
}

/* ------------------------------------------------------------------ */
/* Dashboard                                                           */
/* ------------------------------------------------------------------ */

function Dial() {
  const ticks = Array.from({ length: 52 }, (_, i) => i);
  return (
    <div className="grid place-items-center">
      <svg viewBox="0 0 84 84" className="col-start-1 row-start-1 size-[84px]" aria-hidden="true">
        {ticks.map((i) => {
          const a = ((135 + (i * 270) / 51) * Math.PI) / 180;
          return (
            <line
              key={i}
              x1={42 + 38 * Math.cos(a)}
              y1={42 + 38 * Math.sin(a)}
              x2={42 + 41 * Math.cos(a)}
              y2={42 + 41 * Math.sin(a)}
              stroke={i > 43 ? "#555" : "#f2f2f2"}
              strokeWidth="2"
            />
          );
        })}
      </svg>
      <span className="col-start-1 row-start-1 flex flex-col items-center text-[14px] leading-[14px] text-white">
        85<span className="text-[6px] leading-2 text-[#888]">%</span>
      </span>
    </div>
  );
}

function Tally({ value, top, bottom }: { value: string; top: string; bottom: string }) {
  return (
    <span className="flex w-20 items-center gap-1.5">
      <span className="font-['Liberation_Mono',monospace] text-[14px] text-[#f0f0f0]">{value}</span>
      <span className="flex flex-col text-[6px] leading-[7px]">
        {top}
        <span className="text-[#777]">{bottom}</span>
      </span>
    </span>
  );
}

type Alert = [time: string, text: string, tone?: "red" | "white"];

function AlertList({ alerts, analyze = 0, fade = 99 }: { alerts: Alert[]; analyze?: number; fade?: number }) {
  return (
    <ul className="ml-3.5 flex flex-col border-l border-[#555]">
      {alerts.map(([time, text, tone], i) => (
        <li
          key={time}
          className={`relative flex h-[21px] shrink-0 items-center ${i === fade ? "opacity-60" : i > fade ? "opacity-30" : ""}`}
        >
          <span
            className={`absolute -left-[2px] size-[3px] rounded-full ${
              tone === "red" ? "bg-[#d9304f]" : tone === "white" ? "bg-white" : "bg-[#888]"
            }`}
          />
          <span className="flex flex-col pl-2">
            <span className="font-['Liberation_Mono',monospace] text-[4px] leading-[7px] text-[#888]">2016-12-02 {time}</span>
            <span className="text-[6px] text-[#d0d0d0]">{text}</span>
          </span>
          {i < analyze && (
            <span className="mr-3 ml-auto flex h-3 items-center border border-[#777] px-1.5 text-[6px]">Analyze</span>
          )}
        </li>
      ))}
    </ul>
  );
}

const assets: [string, number, string, number, string][] = [
  ["VDC_005", 5, "Extreme", 41, "67%"],
  ["VDC_021", 5, "Extreme", 47, "76%"],
  ["VDC_009", 4, "High", 38, "59%"],
  ["VDC_013", 4, "High", 54, "90%"],
  ["VDC_002", 4, "High", 49, "84%"],
];

const presets: [string, string][] = [
  ["Data Preset A", "50%"],
  ["Data Preset E", "Passed"],
  ["Data Preset C", "Passed"],
  ["Data Preset A", "Passed"],
  ["Data Preset A", "Failed"],
  ["Data Preset A", "Failed"],
];

const divider = "border-[#1a1a1a]";
const dotted = "border-dotted border-[#454545]";

function DashboardTop({ cursor = false }: { cursor?: boolean }) {
  return (
    <>
      <AppHeader sub="System Dashboard" />
      {cursor && <Pointer className="top-3.5 left-2" />}
      <SubBar>
        <Picker label="Data Preset" value="Data Preset A" />
      </SubBar>
      <div className="relative grid flex-1 grid-cols-4 grid-rows-[178px_1fr] overflow-hidden">
        <div className={`flex flex-col border-r border-b ${divider}`}>
          <h3 className="px-[13px] pt-3 text-[#d4d4d4]">Total Compliance Score</h3>
          <div className="mt-5">
            <Dial />
          </div>
          <div className={`mx-3 mt-auto flex h-[38px] items-center border-t ${dotted}`}>
            <Tally value="120" top="Assets" bottom="Tracked" />
            <Tally value="134" top="Policies" bottom="Enforced" />
          </div>
        </div>
        <div className={`relative col-span-2 flex flex-col border-r border-b ${divider}`}>
          <div className={`flex h-8 items-center border-b ${divider} px-3`}>
            <h3 className="w-36 text-[#d4d4d4]">Compliance Status</h3>
            <span className="flex h-full gap-2 text-[6px]">
              <Tab on>Assets</Tab>
              <Tab>Policies</Tab>
            </span>
            <Expand className="ml-auto size-2 text-[#bbb]" />
          </div>
          <ScrollBar className="top-8 h-[58px]" />
          <table className="mx-3 mt-1 table-fixed text-left text-[6px]">
            <thead>
              <tr className={`h-[22px] border-b ${dotted}`}>
                <th className="w-[172px] pl-1 font-normal">Asset Name</th>
                <th className="w-[83px] font-normal">
                  <span className="flex items-center gap-1">
                    Criticality <ChevronDown className="size-1.5" />
                  </span>
                </th>
                <th className="font-normal">Compliance Score</th>
                <th />
              </tr>
            </thead>
            <tbody>
              {assets.map(([name, level, label, width, pct], i) => (
                <tr key={name} className={`h-[22px] border-b ${dotted} ${i === 4 ? "opacity-40" : ""}`}>
                  <td className="pl-1">
                    <span className="flex items-center gap-1">
                      <ChevronRight className="size-1.5" />
                      {name}
                    </span>
                  </td>
                  <td>
                    <span className="flex items-center gap-[3px]">
                      <span className="flex size-[9px] items-center justify-center rounded-full bg-[#b5b5b5] text-[6px] text-[#333]">
                        {level}
                      </span>
                      {label}
                    </span>
                  </td>
                  <td>
                    <span className="block h-px bg-[#d5d5d5]" style={{ width }} />
                  </td>
                  <td className="pr-1 text-right">{pct}</td>
                </tr>
              ))}
            </tbody>
          </table>
        </div>
        <div className={`flex flex-col border-b ${divider} px-3`}>
          <h3 className="flex h-[34px] items-center text-[#d4d4d4]">Configuration log</h3>
          <ul className="flex flex-col text-[6px]">
            {presets.map(([name, state], i) => (
              <li key={i} className={`flex h-[22px] items-center border-t pl-1 ${dotted} ${i === 5 ? "opacity-40" : ""}`}>
                <span className="w-27">{name}</span>
                {state === "50%" && <span className="mr-1.5 size-2.5 rounded-full border-r border-[#d9304f]" />}
                {state === "Passed" && <CircleCheck className="mr-1.5 size-3" strokeWidth={1.5} />}
                {state === "Failed" && <CircleX className="mr-1.5 size-3 text-[#b3283f]" strokeWidth={1.5} />}
                {state}
              </li>
            ))}
          </ul>
        </div>
        <div className={`flex flex-col border-r ${divider}`}>
          <h3 className="px-[13px] pt-3.5 pb-3 text-[#d4d4d4]">Latest Alerts</h3>
          <AlertList
            alerts={[
              ["14:25", "Excessive access attempts to non-existing…"],
              ["14:20", "Initializing full-time diagnostic data…"],
              ["14:03", "Code (SQL, HTML) seen as part of…"],
              ["13:56", "System scan"],
            ]}
          />
        </div>
        <div className="col-span-3 flex flex-col overflow-hidden">
          <div className="flex h-[35px] shrink-0 items-center px-3">
            <h3 className="w-[227px] text-[#d4d4d4]">Fraud Probability Map</h3>
            <span className="flex h-full gap-1.5 text-[6px]">
              <Tab on>Severity</Tab>
              <Tab>Threat Type</Tab>
            </span>
            <Expand className="ml-auto size-2 text-[#bbb]" />
          </div>
          <CityMap x={-11} y={7} height={110} pins="fraud" />
        </div>
        <ScrollBar className="top-px h-[186px]" />
      </div>
    </>
  );
}

const threatNames = [
  "Port Scanning Activity",
  "Unauthorized Access",
  "Reconaissance Attempts",
  "Advanced Persistent Threat",
  "Insider Breach Attempt",
  "Distributed Denial of Service Attempt",
];
const barTones = ["bg-[#f5f5f5]", "bg-[#cfcfcf]", "bg-[#b5b5b5]", "bg-[#8d8d8d]", "bg-[#666]", "bg-[#4c4c4c]"];

function Ranking({ title, rows }: { title: string; rows: [number, number][] }) {
  return (
    <div className={`flex flex-col border-r ${divider} px-3`}>
      <h3 className="flex h-[33px] items-center text-[#d4d4d4]">{title}</h3>
      {rows.map(([value, width], i) => (
        <div key={i} className="flex h-[22px] flex-col gap-[3px]">
          <span className="flex gap-1 text-[6px] leading-[9px] text-[#858585]">
            {threatNames[i]} <span className="text-[#c4c4c4]">{value}</span>
          </span>
          <span className={`block h-0.5 ${barTones[i]}`} style={{ width }} />
        </div>
      ))}
    </div>
  );
}

const trend =
  "41,54 44,57 48,59 51,57 54,55 60,56 66,56 71,56 76,54 80,52 85,55 90,50 97,51 104,51 110,54 116,57 122,57 125,58 130,60 134,57 140,57 146,59 155,63 163,63 170,64 176,67 181,64 187,64 192,66 196,66 204,63 210,63 217,61 224,66 230,64 235,67 240,66 246,70 251,66 256,68 262,67 269,71 274,67 282,63 285,66 289,70 293,64 297,61 299,68 301,73 304,70 308,71 314,68 318,71 324,68 330,73 335,71 338,64";

function DashboardBottom() {
  return (
    <>
      <AppHeader sub="System Dashboard" />
      <SubBar>
        <Picker label="Data Preset" value="Data Preset A" />
      </SubBar>
      <div className="relative grid flex-1 grid-cols-4 grid-rows-[109px_180px] overflow-hidden">
        <div className={`flex flex-col border-r border-b ${divider}`}>
          <AlertList
            fade={3}
            alerts={[
              ["14:01", "Code (SQL, HTML) seen as part of…"],
              ["13:56", "System scan"],
              ["13:50", "Device added"],
              ["13:45", "Policy added"],
              ["13:20", "Initializing full-time diagnostic data"],
            ]}
          />
        </div>
        <div className="relative col-span-3 overflow-hidden">
          <CityMap x={-8} y={42} height={110} pins="fraud" />
          <MapZoom className="bottom-3" />
        </div>
        <Ranking title="Top Threats" rows={[[642, 155], [421, 113], [370, 94], [266, 53], [129, 22], [33, 9]]} />
        <div className={`col-span-2 border-r ${divider}`}>
          <div className="flex h-[34px] items-center px-3">
            <h3 className="mr-auto text-[#d4d4d4]">Compliance Trend</h3>
            <Picker label="Time" value="Dropdown" />
            <Expand className="ml-3.5 size-2 text-[#bbb]" />
          </div>
          <svg viewBox="0 34 361 130" className="block w-full" fill="none" aria-label="Compliance trend chart">
            <g stroke="#3a3a3a">
              {[41, 90, 140, 190, 240, 289, 338].map((x) => (
                <line key={x} x1={x + 0.5} x2={x + 0.5} y1="42" y2="159" />
              ))}
            </g>
            <polyline points={trend} stroke="#e8e8e8" />
            <g fill="#8f8f8f" fontSize="6" fontFamily="Lato, sans-serif">
              {[100, 75, 50, 25, 0].map((v, i) => (
                <text key={v} x="25" y={52 + i * 20} textAnchor="end">
                  {v}
                </text>
              ))}
              {[17, 18, 19, 20, 21, 22].map((d, i) => (
                <g key={d} textAnchor="middle">
                  <text x={41 + i * 50} y="143">Jul</text>
                  <text x={41 + i * 50} y="151">{d}</text>
                </g>
              ))}
              <text x="338" y="143" textAnchor="middle">Today</text>
            </g>
          </svg>
        </div>
        <Ranking title="Top Vulnerabilities" rows={[[878, 155], [834, 137], [787, 106], [345, 47], [321, 39], [300, 28]]} />
        <ScrollBar className="bottom-0 h-[186px]" />
      </div>
    </>
  );
}

/* ------------------------------------------------------------------ */
/* Design studio                                                       */
/* ------------------------------------------------------------------ */

const controls: [string, typeof Shield][] = [
  ["Identify and Access", Shield],
  ["Key and Certificate", KeyRound],
  ["Logging and Monitoring", Search],
  ["Data Protection", ShieldCheck],
  ["Network Security", Network],
  ["HW Assisted and Virtual Security", Cpu],
];

const deviceKinds: [string, ReactNode][] = [
  ["Sensors", <Cpu className="size-3" />],
  ["Automobiles", <FaCarSide className="size-3" />],
  ["Smart Meters", <GaugeIcon className="size-3" />],
  ["Cameras", <Camera className="size-3" />],
  ["Smartphones", <Smartphone className="size-3" />],
  ["Door Locks", <RadioTower className="size-3" />],
];

const studioArt: Record<string, ReactNode> = {
  cube: (
    <>
      <path d="M10 0.500L19 5L10 9.500L1 5Z" stroke="#8d8d8d" strokeWidth="1" />
      <path d="M10 2.500L15 5L10 7.500L5 5Z" fill="#8d8d8d" opacity="0.5" />
      <path d="M1 6L9.500 10.500V19.500L1 15Z" fill="#8d8d8d" />
      <path d="M19 6L10.500 10.500V19.500L19 15Z" fill="#8d8d8d" />
      <path d="M3 9.500L7.500 12M3 12L7.500 14.500M12.500 14L17 11.500" stroke="#252525" />
    </>
  ),
  antenna: (
    <>
      <path d="M10 7L15 19H5Z" fill="#8d8d8d" />
      <path d="M8 14L12 17M12 14L8 17" stroke="#252525" />
      <circle cx="10" cy="6" r="1.500" fill="#8d8d8d" />
      <path d="M7 9A4 4 0 0 1 7 3M13 9A4 4 0 0 0 13 3M5 11.500A8 8 0 0 1 5 0.500M15 11.500A8 8 0 0 0 15 0.500" stroke="#8d8d8d" />
    </>
  ),
  cloud: (
    <>
      <path d="M4.500 16A4.500 4.500 0 0 1 3 7.500A6 6 0 0 1 10 2A6 6 0 0 1 17 7.500A4.500 4.500 0 0 1 15.500 16L10 19Z" fill="#8d8d8d" />
      <path d="M10 7L15 9.500L10 12L5 9.500ZM5 12L10 14.500L15 12M5 14.500L10 17L15 14.500" stroke="#252525" />
    </>
  ),
};

function CloseBox() {
  return (
    <span className="flex h-[17px] w-8 items-center justify-center rounded-xs border border-[#8a8a8a]">
      <X className="size-2" />
    </span>
  );
}

function DeviceMenu() {
  return (
    <div className="absolute inset-x-0 bottom-0 flex flex-col bg-[#303030]">
      <div className="grid grid-cols-3">
        {deviceKinds.map(([name, icon]) => (
          <span
            key={name}
            className={`relative flex h-[46px] flex-col items-center justify-center gap-1 border-r border-b border-[#222] text-[6px] ${
              name === "Automobiles" ? "bg-[#3b82e6] text-white" : "text-[#b5b5b5]"
            }`}
          >
            {icon}
            {name}
            {name === "Automobiles" && <Pointer className="right-1.5 bottom-0" />}
          </span>
        ))}
      </div>
      <div className="flex h-[42px] items-center justify-center">
        <CloseBox />
      </div>
    </div>
  );
}

function CarMenu() {
  return (
    <div className="absolute inset-x-0 bottom-0 flex h-[141px] flex-col bg-[#303030]">
      {["Self-driving", "SUV's", "Staff Cars", "Low-consumption cars"].map((name, i) => (
        <span
          key={name}
          className={`relative flex h-5 items-center gap-1 border-b border-[#222] pl-1.5 text-[6px] ${
            i === 0 ? "bg-[#5f97e8] text-white" : ""
          }`}
        >
          <Plus className="size-1.5" />
          {name}
          {i === 0 && <Pointer className="right-22 -bottom-0.5" />}
        </span>
      ))}
      <div className="mt-auto mb-3 grid grid-cols-3 items-center justify-items-center text-[6px]">
        <span className="flex items-center gap-0.5 text-[#888]">
          <ArrowLeft className="size-2" />
          Back
        </span>
        <CloseBox />
      </div>
    </div>
  );
}

function StudioColumn({
  title,
  note,
  art,
  dim = false,
  covered = false,
  hot = false,
  menu,
}: {
  title: string;
  note: string;
  art: string;
  dim?: boolean;
  covered?: boolean;
  hot?: boolean;
  menu?: ReactNode;
}) {
  return (
    <div className={`relative flex flex-col border-r ${divider}`}>
      <div className={`flex h-[31px] shrink-0 items-center justify-between border-b ${divider} px-3 ${dim ? "text-[#555]" : "text-[#d4d4d4]"}`}>
        <h3>{title}</h3>
        <span className="flex gap-0.5">
          <span className="h-px w-1.5 bg-[#555]" />
          <span className="h-px w-1.5 bg-[#555]" />
          <span className="h-px w-1.5 bg-[#555]" />
        </span>
      </div>
      <div className={`flex flex-1 flex-col items-center pt-[94px] ${dim || covered ? "opacity-35" : ""}`}>
        <svg viewBox="0 0 20 20" className="size-5" fill="none" aria-hidden="true">
          {studioArt[art]}
        </svg>
        <span className="mt-1.5 text-[#8a8a8a]">{note}</span>
        <span className="mt-1.5 text-[6px] text-[#a5a5a5]">Click the plus sign below…</span>
      </div>
      <span
        className={`relative mb-3 flex h-[17px] w-8 items-center justify-center self-center rounded-xs text-white ${
          hot ? "bg-[#5f97e8]" : dim ? "bg-[#2b4c7e]" : "bg-[#3b82e6]"
        }`}
      >
        <Plus className="size-2.5" strokeWidth={1.5} />
        {hot && <Pointer className="right-1 -bottom-1" />}
      </span>
      {menu}
    </div>
  );
}

function Studio({ menu }: { menu?: "devices" | "cars" | "ready" }) {
  const open = menu === "devices" || menu === "cars";
  return (
    <>
      <AppHeader sub="360 Security Design Studio" />
      <SubBar tools="search">
        <Picker label="Security Standard" value="Dropdown" />
        <span className="ml-1.5 flex h-3 w-8 items-center justify-center rounded-xs bg-[#264a80] text-[6px] text-[#4b6fa6]">Deploy</span>
      </SubBar>
      <div className="grid flex-1 grid-cols-4">
        <div className={`flex flex-col border-r ${divider}`}>
          <div className={`flex h-[31px] items-center justify-between border-b ${divider} px-[13px]`}>
            <h3 className="text-[#d4d4d4]">Total Assurance Score</h3>
            <span className="text-[6px]">No assets</span>
          </div>
          <div className="flex h-9 items-center justify-between px-[13px]">
            <h3 className="text-[#d4d4d4]">Security Controls</h3>
            {!open && <Search className="size-2 text-[#aaa]" />}
          </div>
          <ul className="flex flex-col gap-1.5 px-[13px]">
            {controls.map(([name, Icon]) => (
              <li
                key={name}
                className={`flex h-5 items-center gap-1.5 bg-[#2b2b2b] px-1.5 text-[6px] ${
                  menu === "ready" ? "text-[#b5b5b5]" : "text-[#666]"
                }`}
              >
                <Icon className="size-2" />
                {name}
              </li>
            ))}
          </ul>
        </div>
        <StudioColumn
          title="Device Types"
          note="No device types added"
          art="cube"
          covered={open}
          hot={!menu}
          menu={menu === "devices" ? <DeviceMenu /> : menu === "cars" ? <CarMenu /> : undefined}
        />
        <StudioColumn title="Connectivity" note="No network slices added" art="antenna" dim={open} />
        <StudioColumn title="Cloud Applications" note="No cloud apps added" art="cloud" dim={open} />
      </div>
    </>
  );
}

/* ------------------------------------------------------------------ */
/* 360 monitoring                                                      */
/* ------------------------------------------------------------------ */

function Orbit({ stage }: { stage: number }) {
  const red = "#d9304f";
  const node = (hit: boolean) => (hit ? red : "#bdbdbd");
  const core = [17, 26, 34, 17][stage];
  return (
    <svg viewBox="0 0 90 84" className="h-[84px] w-[90px]" fill="none" aria-hidden="true">
      <circle cx="45" cy="44" r="34" stroke="#3d3d3d" />
      <circle cx="45" cy="44" r={core} fill="#4f1c27" stroke={red} />
      {stage > 0 && stage < 3 && <circle cx="45" cy="44" r="17" fill="#6b2030" />}
      <g stroke="#999">
        <path d="M45 20V27" />
        <path d="M59 50L67 53M31 50L23 53" stroke={red} />
      </g>
      <circle cx="45" cy="12" r="8" fill="#252525" stroke={node(stage > 0)} />
      <path d="M41 9.500V14.500M49 9.500V14.500M43 10.500V13.500M47 10.500V13.500M44.500 12H45.500" stroke="#ddd" />
      <circle cx="15" cy="55" r="8" fill="#3a1a20" stroke={red} />
      <path d="M15 51L19 53V57.500L15 60L11 57.500V53ZM11 53L15 55.500L19 53M15 55.500V60" stroke="#ddd" />
      <circle cx="75" cy="55" r="8" fill="#252525" stroke={node(stage > 1)} />
      <path d="M72 58A2.500 2.500 0 0 1 72 54A3.500 3.500 0 0 1 78 54A2.500 2.500 0 0 1 78 58Z" stroke="#ddd" />
      <path d="M45 36L52 38.500V48L45 52L38 48V38.500Z" stroke="#ccc" />
      <path d="M45 38L39.500 40V47L45 50Z" fill="#fff" />
    </svg>
  );
}

type Meter = [name: string, width: number, pct: string, badge?: string, red?: boolean];

function MeterPanel({ title, bar, red = false, rows }: { title: string; bar: number; red?: boolean; rows: Meter[] }) {
  return (
    <div className={`flex flex-col border-r ${divider} px-3`}>
      <div className="flex h-8 items-center">
        <h3 className="w-[88px] text-[#d4d4d4]">{title}</h3>
        <span className="flex w-16 border-b border-[#3a3a3a] pb-px">
          <span className={`h-0.5 ${red ? "bg-[#d9304f]" : "bg-[#d5d5d5]"}`} style={{ width: bar }} />
        </span>
      </div>
      <ul className={`flex flex-col border-t text-[6px] ${dotted}`}>
        {rows.map(([name, width, pct, badge, hit]) => (
          <li key={name} className={`flex h-[23px] items-center border-b pr-1 pl-1 ${dotted}`}>
            <span className="flex w-[84px] items-center gap-1.5">
              {badge && (
                <span
                  className={`flex size-[11px] items-center justify-center rounded-full text-[6px] ${
                    hit ? "bg-[#d9304f] text-white" : "bg-[#a9a9a9] text-[#333]"
                  }`}
                >
                  {badge}
                </span>
              )}
              {name}
            </span>
            <span className={`h-px ${hit ? "bg-[#d9304f]" : "bg-[#d5d5d5]"}`} style={{ width }} />
            <span className="ml-auto">{pct}</span>
          </li>
        ))}
      </ul>
    </div>
  );
}

const quiet: Alert[] = [
  ["14:25", "Excessive access attempts to non-e…"],
  ["14:20", "Initializing full-time diagnostic data…"],
  ["14:18", "Code (SQL, HTML) seen as part of…"],
  ["13:23", "Access to extensions you have not…"],
];
const hits: Alert[] = [
  ["14:33", "Cloud compromised", "red"],
  ["14:30", "Network compromised", "red"],
  ["14:28", "Device compromised", "red"],
];

function Monitor({ stage }: { stage: 0 | 1 | 2 | 3 }) {
  const score = ["25%", "25%", "9%", "85%"][stage];
  const alerts: Alert[] =
    stage === 3
      ? [["14:35", "Policy enforced", "white"], ...hits, ...quiet.slice(0, 1)]
      : [...hits.slice(2 - stage), ...quiet.slice(0, 4 - stage)];
  return (
    <>
      <AppHeader sub="360 Security Monitor" count={13 + stage} alarm />
      <SubBar>
        <span
          className={`flex h-3 w-[41px] items-center justify-center rounded-xs text-[6px] ${
            stage === 3 ? "bg-[#7a2034] text-[#a85a6a]" : "bg-[#3b82e6] text-[#dce8fb]"
          }`}
        >
          Enforce Policy
        </span>
        <span className="ml-1 flex h-3 w-11 items-center justify-center border border-[#8a8a8a] text-[6px]">Isolate Devices</span>
      </SubBar>
      <div className="grid flex-1 grid-cols-4 grid-rows-[145px_144px] overflow-hidden">
        <div className={`flex flex-col border-r border-b ${divider} px-[13px]`}>
          <h3 className="pt-3 text-[#d4d4d4]">Total Compliance Score</h3>
          <div className="mt-2.5 flex items-center justify-between">
            <span className="flex w-[139px] border-b border-[#3a3a3a] pb-[3px]">
              <span
                className={`h-0.5 ${stage === 3 ? "bg-[#4caf50]" : "bg-[#d9304f]"}`}
                style={{ width: [31, 31, 14, 120][stage] }}
              />
            </span>
            <span className="text-[6px]">{score}</span>
          </div>
          {stage !== 3 && (
            <div className="mt-3.5 ml-7">
              <Orbit stage={stage} />
            </div>
          )}
        </div>
        <div className={`relative col-span-3 overflow-hidden border-b ${divider}`}>
          <CityMap height={145} pins={stage === 1 ? "spread" : stage === 2 ? "cloud" : "device"} />
          <span className="absolute top-3 right-3 flex size-[11px] items-center justify-center bg-[#4d4d4d] text-[#ccc]">
            <Expand className="size-2" />
          </span>
          <MapZoom className="bottom-3" />
        </div>
        <div className={`flex flex-col overflow-hidden border-r ${divider}`}>
          <h3 className="px-[13px] pt-3 pb-2 text-[#d4d4d4]">Latest Alerts</h3>
          <AlertList alerts={alerts} analyze={stage === 3 ? 0 : stage + 1} fade={4} />
        </div>
        <MeterPanel
          title="Devices"
          bar={15}
          red
          rows={[
            ["Sensors", 34, "72%", "19"],
            ["Smart Meter", 42, "100%", "4"],
            ["Automobiles", 34, "76%", "12"],
            ["Camera", 9, "18%", "32", true],
          ]}
        />
        <MeterPanel
          title="Networks"
          bar={stage ? 15 : 52}
          red={stage > 0}
          rows={[
            ["5G Industrial Automation", 34, "84%"],
            ["3G Legacy Network", 39, "92%"],
            ["5G NB-IoT Network", stage ? 7 : 39, stage ? "12%" : "95%", undefined, stage > 0],
          ]}
        />
        <MeterPanel
          title="Cloud Apps"
          bar={stage === 2 ? 15 : 60}
          red={stage === 2}
          rows={[
            ["Public Cloud", 37, "98%"],
            ["Private Cloud", stage === 2 ? 9 : 33, stage === 2 ? "22%" : "85%", undefined, stage === 2],
          ]}
        />
      </div>
    </>
  );
}

/* ------------------------------------------------------------------ */
/* Menu overlay                                                        */
/* ------------------------------------------------------------------ */

const menuItems = [
  "Asset Management",
  "Policy Management",
  "360 Security",
  "Dashboards",
  "System Dashboard",
  "Configuration",
  "Compliance",
  "Threat Management",
  "Fraud Management",
  "Vulnerability Management",
  "Report Management",
];

function MenuOpen() {
  return (
    <div className="flex flex-1 flex-col bg-black">
      <AppHeader lead="close" sub="System Dashboard" />
      <div className="mx-3 mt-3 flex h-[21px] w-40 items-center border border-[#555] px-1.5 text-[#888]">Filter by name</div>
      <ul className="mt-4 flex w-[184px] flex-col">
        {menuItems.map((item, i) => (
          <li
            key={item}
            className={`flex h-[15px] items-center ${
              i === 2
                ? "bg-[#3b82e6] pl-3 text-[#cfe0fa]"
                : i === 4
                  ? "border-l-2 border-white bg-[#222] pl-4"
                  : "pl-3"
            }`}
          >
            {item}
          </li>
        ))}
      </ul>
    </div>
  );
}

/* ------------------------------------------------------------------ */
/* Canvas                                                              */
/* ------------------------------------------------------------------ */

function Canvas() {
  return (
    <main className="flex min-w-0 flex-1 flex-col overflow-hidden bg-[#131416] pt-12 pl-[52px]">
      <div className="flex gap-[54px]">
        <Artboard name="launcher (grid)">
          <Launcher />
        </Artboard>
        <Artboard name="launcher (grid) (hover)">
          <Launcher hover />
        </Artboard>
      </div>
      <div className="mt-[73px] flex gap-[54px]">
        <Artboard name="dashboard">
          <DashboardTop />
        </Artboard>
        <Artboard name="dashboard (scrolled to bottom)">
          <DashboardBottom />
        </Artboard>
        <Artboard name="dashboard">
          <DashboardTop cursor />
        </Artboard>
        <Artboard name="dashboard (menu open)">
          <MenuOpen />
        </Artboard>
      </div>
      <div className="mt-[75px] flex gap-[54px]">
        <Artboard name="design studio">
          <Studio />
        </Artboard>
        <Artboard name="design studio (slide open)">
          <Studio menu="devices" />
        </Artboard>
        <Artboard name="design studio (slide open)">
          <Studio menu="cars" />
        </Artboard>
        <Artboard name="design studio (controls added)">
          <Studio menu="ready" />
        </Artboard>
      </div>
      <div className="mt-[68px] flex gap-[54px]">
        <Artboard name="360 monitoring (threat)">
          <Monitor stage={0} />
        </Artboard>
        <Artboard name="360 monitoring (threat expanding)">
          <Monitor stage={1} />
        </Artboard>
        <Artboard name="360 monitoring (threat to cloud)">
          <Monitor stage={2} />
        </Artboard>
        <Artboard name="360 monitoring (policy enforced)">
          <Monitor stage={3} />
        </Artboard>
      </div>
    </main>
  );
}

export default function App() {
  return (
    <div className="h-screen bg-[#e8e8e8] font-[Inter,sans-serif]">
      <div className="flex h-full flex-col overflow-hidden rounded-xl bg-[#131416]">
        <TitleBar />
        <div className="flex min-h-0 flex-1">
          <Sidebar />
          <Canvas />
          <Inspector />
        </div>
      </div>
    </div>
  );
}
